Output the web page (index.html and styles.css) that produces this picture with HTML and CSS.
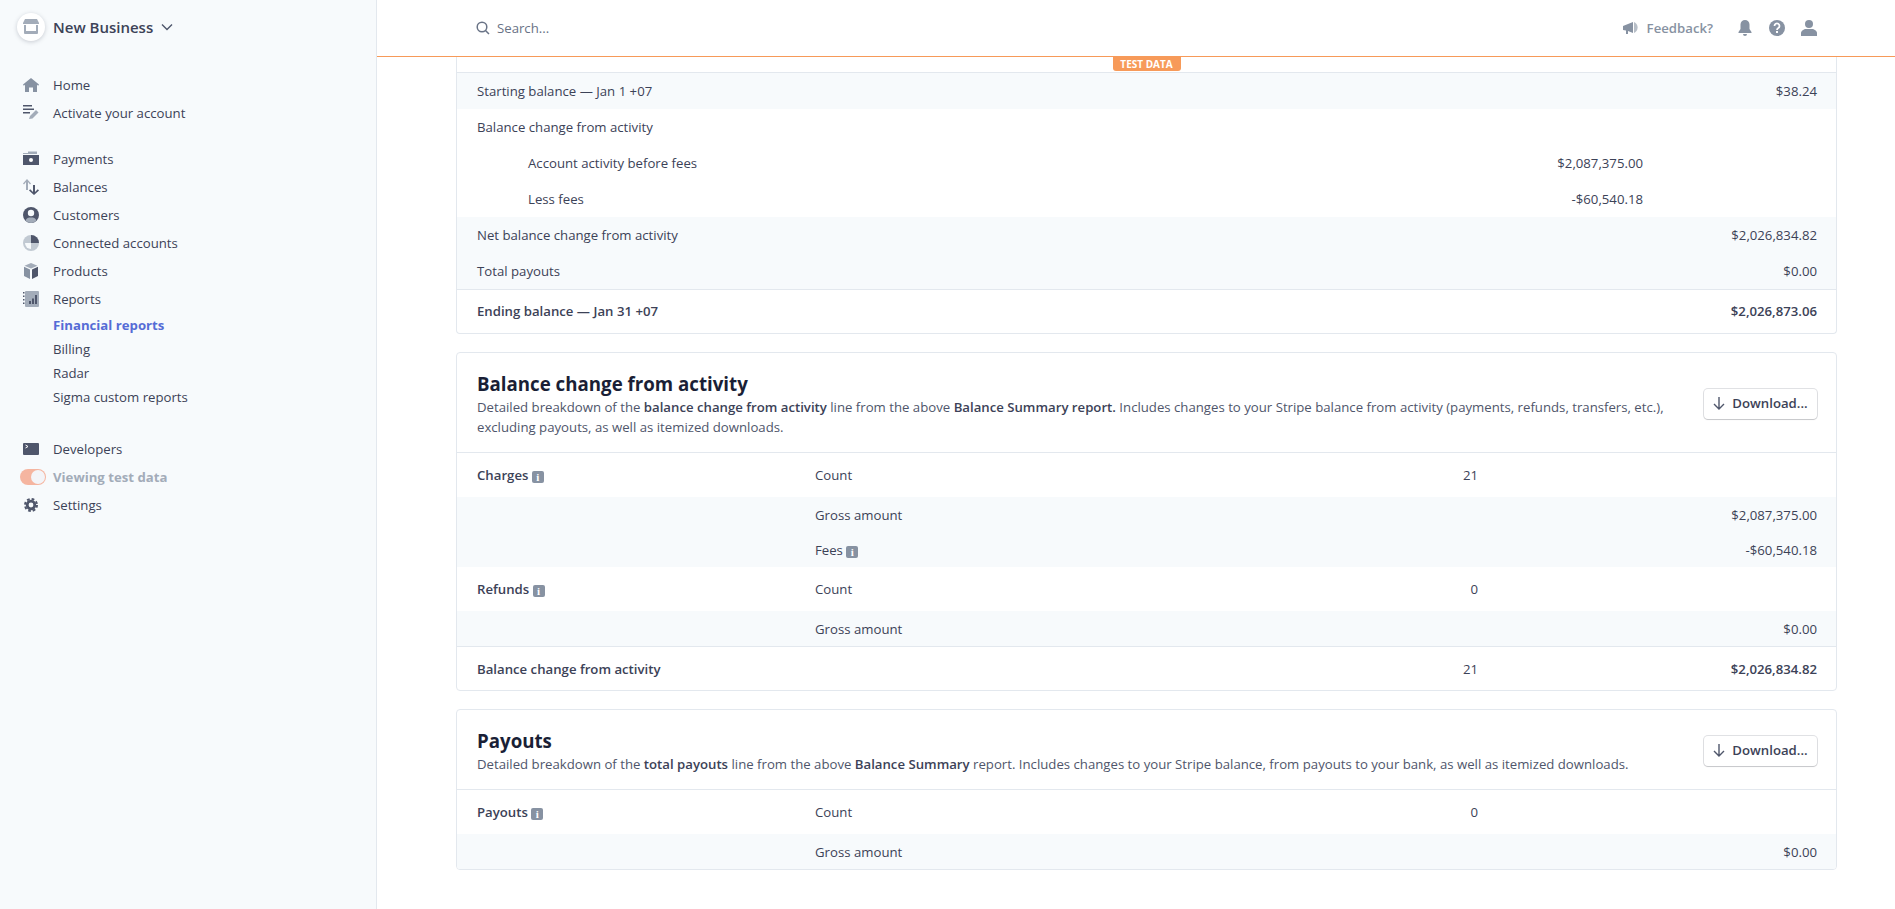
FILE: index.html
```html
<!DOCTYPE html>
<html lang="en">
<head>
    <meta charset="UTF-8">
    <title>Financial reports</title>
    <link rel="stylesheet" href="styles.css">
</head>
<body>
    <aside class="sidebar">
        <div class="account">
            <span class="account-logo">
                <svg width="16" height="16" viewBox="0 0 16 16"><path fill="#a3acb9" d="M2 0h12l2 4v1H0V4z"/><path fill="#a3acb9" d="M1 6h2v6h10V6h2v8a1 1 0 0 1-1 1H2a1 1 0 0 1-1-1z"/><rect x="3" y="7" width="10" height="5" fill="#fff"/></svg>
            </span>
            <span class="account-name">New Business</span>
            <svg class="chevron" width="12" height="8" viewBox="0 0 12 8"><path d="M1 1.5l5 5 5-5" fill="none" stroke="#4f566b" stroke-width="1.4"/></svg>
        </div>

        <nav class="nav-group">
            <a class="nav-item">
                <svg class="nav-icon" viewBox="0 0 16 16"><path fill="#8792a2" d="M8 1l8 6.5-.8 1.2L14 7.8V15h-4v-4.5H6V15H2V7.800L.8 8.700 0 7.500z"/></svg>
                Home
            </a>
            <a class="nav-item">
                <svg class="nav-icon" viewBox="0 0 16 16"><path fill="#4f566b" d="M0 0h9v1.500H0zM0 3.500h11V5H0zM0 7h7v1.500H0z"/><path fill="#a3acb9" d="M6 14l1-3 6-6 2.500 2.500-6 6z"/></svg>
                Activate your account
            </a>
        </nav>

        <nav class="nav-group">
            <a class="nav-item">
                <svg class="nav-icon" viewBox="0 0 16 16"><path fill="#a3acb9" d="M0 2h5V.500h9V3H0z"/><path fill="#4f566b" d="M0 4h16v10H0z"/><circle cx="8" cy="9" r="2" fill="#fff"/></svg>
                Payments
            </a>
            <a class="nav-item">
                <svg class="nav-icon" viewBox="0 0 16 16"><path fill="#a3acb9" d="M4 0l4 4.500-1 1L5 3v8H3V3L1 5.500 0 4.500z"/><path fill="#4f566b" d="M10 6h2v7l2.800-2.800 1.200 1.200L11 16l-5-4.600 1.200-1.200L10 13z"/></svg>
                Balances
            </a>
            <a class="nav-item">
                <svg class="nav-icon" viewBox="0 0 16 16"><circle cx="8" cy="8" r="8" fill="#4f566b"/><path fill="#a3acb9" d="M2.500 13.500C3.500 11 5.500 10.500 8 10.500s4.500.5 5.500 3A8 8 0 0 1 8 16a8 8 0 0 1-5.500-2.500z"/><circle cx="8" cy="6" r="3.200" fill="#f7fafc"/></svg>
                Customers
            </a>
            <a class="nav-item">
                <svg class="nav-icon" viewBox="0 0 16 16"><circle cx="8" cy="8" r="8" fill="#c1c9d2"/><path fill="#4f566b" d="M8 0a8 8 0 0 1 8 8H8z"/><path fill="#f7fafc" d="M2 8h6v6a6 6 0 0 1-6-6z"/></svg>
                Connected accounts
            </a>
            <a class="nav-item">
                <svg class="nav-icon" viewBox="0 0 16 16"><path fill="#a3acb9" d="M8 0l6.500 2.800L8 5.600 1.500 2.800z"/><path fill="#8792a2" d="M1 3.800l6 2.700V16l-6-3z"/><path fill="#4f566b" d="M15 3.800L9 6.500V16l6-3z"/></svg>
                Products
            </a>
            <a class="nav-item">
                <svg class="nav-icon" viewBox="0 0 16 16"><rect x="2" width="14" height="16" rx="1" fill="#a3acb9"/><path fill="#4f566b" d="M0 1h1.500v1.500H0zM0 4.500h1.500V6H0zM0 8h1.500v1.500H0zM0 11.500h1.500V13H0zM6 10h2v3H6zM9 7.500h2V13H9zM12 4h2v9h-2z"/></svg>
                Reports
            </a>
            <div class="sub-nav">
                <a class="sub-item active">Financial reports</a>
                <a class="sub-item">Billing</a>
                <a class="sub-item">Radar</a>
                <a class="sub-item">Sigma custom reports</a>
            </div>
        </nav>

        <nav class="nav-group">
            <a class="nav-item">
                <svg class="nav-icon" viewBox="0 0 16 16"><rect y="2" width="16" height="12" rx="1" fill="#4f566b"/><path d="M2.500 4L5 5.500 2.500 7" fill="none" stroke="#fff" stroke-width="1"/></svg>
                Developers
            </a>
            <a class="nav-item muted">
                <span class="toggle"><span class="toggle-knob"></span></span>
                Viewing test data
            </a>
            <a class="nav-item">
                <svg class="nav-icon" viewBox="0 0 16 16"><circle cx="8" cy="8" r="3.800" fill="none" stroke="#4f566b" stroke-width="2.800"/><circle cx="8" cy="8" r="6" fill="none" stroke="#4f566b" stroke-width="2" stroke-dasharray="2.700 2"/></svg>
                Settings
            </a>
        </nav>
    </aside>

    <div class="main">
        <header class="topbar">
            <div class="search">
                <svg width="14" height="14" viewBox="0 0 14 14"><circle cx="6" cy="6" r="4.800" fill="none" stroke="#697386" stroke-width="1.500"/><path d="M9.500 9.500L13 13" stroke="#697386" stroke-width="1.500"/></svg>
                <span>Search...</span>
            </div>
            <div class="top-actions">
                <a class="feedback">
                    <svg width="15" height="14" viewBox="0 0 15 14"><path fill="#8792a2" d="M0 5l10-4v11L5 10v3H3V9.500L0 9z"/><path fill="#8792a2" d="M11 1a6 6 0 0 1 0 11z" opacity=".6"/></svg>
                    Feedback?
                </a>
                <svg class="top-icon" viewBox="0 0 16 16"><path fill="#8792a2" d="M8 0a4.500 4.500 0 0 1 4.500 4.500V9l2 3v1h-13v-1l2-3V4.500A4.500 4.500 0 0 1 8 0zM6 14h4a2 2 0 0 1-4 0z"/></svg>
                <svg class="top-icon" viewBox="0 0 16 16"><circle cx="8" cy="8" r="8" fill="#8792a2"/><path d="M5.500 6a2.500 2.500 0 1 1 3.800 2.100C8.400 8.700 8 9 8 10" fill="none" stroke="#fff" stroke-width="1.800"/><rect x="7" y="11" width="2" height="2" fill="#fff"/></svg>
                <svg class="top-icon" viewBox="0 0 16 16"><circle cx="8" cy="4" r="4" fill="#8792a2"/><path fill="#8792a2" d="M0 16v-3c0-2 3-4 5-4h6c2 0 5 2 5 4v3z"/></svg>
            </div>
        </header>

        <div class="content">
            <section class="card card-summary">
                <span class="test-badge">TEST DATA</span>
                <div class="summary">
                    <div class="s-row shaded"><span>Starting balance — Jan 1 +07</span><span></span><span>$38.24</span></div>
                    <div class="s-row"><span>Balance change from activity</span><span></span><span></span></div>
                    <div class="s-row indent"><span>Account activity before fees</span><span>$2,087,375.00</span><span></span></div>
                    <div class="s-row indent"><span>Less fees</span><span>-$60,540.18</span><span></span></div>
                    <div class="s-row shaded"><span>Net balance change from activity</span><span></span><span>$2,026,834.82</span></div>
                    <div class="s-row shaded"><span>Total payouts</span><span></span><span>$0.00</span></div>
                    <div class="s-row total"><span>Ending balance — Jan 31 +07</span><span></span><span>$2,026,873.06</span></div>
                </div>
            </section>

            <section class="card">
                <div class="card-head">
                    <div class="card-intro">
                        <h2>Balance change from activity</h2>
                        <p>Detailed breakdown of the <b>balance change from activity</b> line from the above <b>Balance Summary report.</b> Includes changes to your Stripe balance from activity (payments, refunds, transfers, etc.),<br>excluding payouts, as well as itemized downloads.</p>
                    </div>
                    <button class="download">
                        <svg width="12" height="13" viewBox="0 0 12 13"><path d="M6 0v12M1 7l5 5 5-5" fill="none" stroke="#4f566b" stroke-width="1.400"/></svg>
                        Download...
                    </button>
                </div>
                <div class="d-row first">
                    <span class="label">Charges <i class="info">i</i></span><span>Count</span><span class="num">21</span><span></span>
                </div>
                <div class="d-row shaded">
                    <span></span><span>Gross amount</span><span></span><span class="num">$2,087,375.00</span>
                </div>
                <div class="d-row shaded">
                    <span></span><span>Fees <i class="info">i</i></span><span></span><span class="num">-$60,540.18</span>
                </div>
                <div class="d-row first">
                    <span class="label">Refunds <i class="info">i</i></span><span>Count</span><span class="num">0</span><span></span>
                </div>
                <div class="d-row shaded">
                    <span></span><span>Gross amount</span><span></span><span class="num">$0.00</span>
                </div>
                <div class="d-row total">
                    <span class="label">Balance change from activity</span><span></span><span class="num">21</span><span class="num label">$2,026,834.82</span>
                </div>
            </section>

            <section class="card">
                <div class="card-head">
                    <div class="card-intro">
                        <h2>Payouts</h2>
                        <p>Detailed breakdown of the <b>total payouts</b> line from the above <b>Balance Summary</b> report. Includes changes to your Stripe balance, from payouts to your bank, as well as itemized downloads.</p>
                    </div>
                    <button class="download">
                        <svg width="12" height="13" viewBox="0 0 12 13"><path d="M6 0v12M1 7l5 5 5-5" fill="none" stroke="#4f566b" stroke-width="1.400"/></svg>
                        Download...
                    </button>
                </div>
                <div class="d-row first">
                    <span class="label">Payouts <i class="info">i</i></span><span>Count</span><span class="num">0</span><span></span>
                </div>
                <div class="d-row shaded">
                    <span></span><span>Gross amount</span><span></span><span class="num">$0.00</span>
                </div>
            </section>
        </div>
    </div>
</body>
</html>
```

FILE: styles.css
```css
* {
    box-sizing: border-box;
}

body {
    display: flex;
    height: 100vh;
    margin: 0;
    overflow: hidden;
    font-family: "Open Sans", "Noto Sans", Arial, sans-serif;
    font-size: 13.2px;
    color: #3c4257;
    background-color: #fff;
}

/* Sidebar */
.sidebar {
    flex: 0 0 377px;
    padding: 13px 0 0 23px;
    background-color: #f7fafc;
    border-right: 1px solid #e3e8ee;
}

.account {
    display: flex;
    align-items: center;
    height: 28px;
    margin: 0 0 30px -6px;
}

.account-logo {
    display: flex;
    align-items: center;
    justify-content: center;
    width: 28px;
    height: 28px;
    margin-right: 8px;
    background-color: #fff;
    border-radius: 50%;
    box-shadow: 0 1px 4px rgba(60, 66, 87, 0.25);
}

.account-name {
    font-size: 15px;
    font-weight: 600;
    color: #3c4257;
}

.chevron {
    margin-left: 8px;
}

.nav-group {
    margin-bottom: 18px;
}

.nav-item {
    display: flex;
    align-items: center;
    height: 28px;
    color: #3c4257;
}

.nav-icon {
    width: 16px;
    height: 16px;
    margin-right: 14px;
}

.muted {
    font-weight: 700;
    color: #a3acb9;
}

.toggle {
    display: block;
    width: 26px;
    height: 16px;
    margin: 0 7px 0 -3px;
    padding: 1px;
    background-color: #f5b5a0;
    border-radius: 8px;
}

.toggle-knob {
    display: block;
    width: 14px;
    height: 14px;
    margin-left: 10px;
    background-color: #f3f4f8;
    border-radius: 50%;
}

.sub-nav {
    padding-left: 30px;
    margin-bottom: 26px;
}

.sub-item {
    display: flex;
    align-items: center;
    height: 24px;
    color: #3c4257;
}

.active {
    font-weight: 700;
    color: #556cd6;
}

/* Top bar */
.main {
    display: flex;
    flex: 1;
    flex-direction: column;
    min-width: 0;
}

.topbar {
    display: flex;
    flex: 0 0 57px;
    align-items: center;
    justify-content: space-between;
    padding: 0 78px 0 99px;
    border-bottom: 1px solid #f79a59;
}

.search {
    display: flex;
    align-items: center;
    gap: 7px;
    color: #697386;
}

.top-actions {
    display: flex;
    align-items: center;
}

.feedback {
    display: flex;
    align-items: center;
    gap: 9px;
    margin-right: 24px;
    font-weight: 600;
    color: #8792a2;
}

.top-icon {
    width: 16px;
    height: 16px;
    margin-left: 16px;
}

.feedback + .top-icon {
    margin-left: 0;
}

/* Content */
.content {
    flex: 1;
    padding: 0 58px 0 79px;
    overflow: hidden;
}

.card {
    position: relative;
    margin-bottom: 18px;
    overflow: hidden;
    background-color: #fff;
    border: 1px solid #e3e8ee;
    border-radius: 4px;
}

.card-summary {
    padding-top: 15px;
    border-top: none;
    border-radius: 0 0 4px 4px;
}

.test-badge {
    position: absolute;
    top: 0;
    left: 50%;
    width: 68px;
    height: 14px;
    margin-left: -34px;
    font-size: 10px;
    font-weight: 700;
    line-height: 14px;
    color: #fff;
    text-align: center;
    background-color: #f79a59;
    border-radius: 0 0 3px 3px;
}

.summary {
    border-top: 1px solid #e3e8ee;
}

.s-row {
    display: grid;
    grid-template-columns: 1fr 150px 174px;
    align-items: center;
    height: 36px;
    padding: 0 19px 0 20px;
    text-align: right;
}

.s-row span:first-child {
    text-align: left;
}

.indent {
    padding-left: 71px;
}

.shaded {
    background-color: #f7fafc;
}

.s-row.total {
    height: 44px;
    padding-bottom: 2px;
    font-weight: 600;
    border-top: 1px solid #e3e8ee;
}

.card-head {
    display: flex;
    align-items: center;
    justify-content: space-between;
    gap: 36px;
    padding: 18px 19px 15px 20px;
    border-bottom: 1px solid #e3e8ee;
}

.card-head h2 {
    margin: 0;
    font-size: 18.7px;
    font-weight: 700;
    line-height: 26px;
    color: #1a1f36;
}

.card-head p {
    margin: 0;
    line-height: 20px;
    color: #4f566b;
}

.card-head b {
    font-weight: 600;
    color: #3c4257;
}

.download {
    display: flex;
    flex: 0 0 113px;
    align-items: center;
    justify-content: center;
    gap: 7px;
    height: 30px;
    padding: 0 0 2px;
    font-family: inherit;
    font-size: 13.2px;
    font-weight: 600;
    color: #3c4257;
    background-color: #fff;
    border: none;
    border-radius: 4px;
    box-shadow: 0 0 0 1px rgba(60, 66, 87, 0.16), 0 1px 1px rgba(0, 0, 0, 0.12);
}

.d-row {
    display: grid;
    grid-template-columns: 338px 1fr 60px 339px;
    align-items: center;
    height: 35px;
    padding: 0 19px 0 20px;
}

.num {
    text-align: right;
}

.first {
    height: 44px;
}

.label {
    font-weight: 600;
}

.d-row.total {
    height: 44px;
    border-top: 1px solid #e3e8ee;
}

.info {
    display: inline-block;
    width: 12px;
    height: 12px;
    font-family: "Liberation Serif", serif;
    font-size: 11px;
    font-weight: 700;
    font-style: normal;
    line-height: 12px;
    color: #fff;
    text-align: center;
    vertical-align: -1px;
    background-color: #8792a2;
    border-radius: 2px;
}
```
